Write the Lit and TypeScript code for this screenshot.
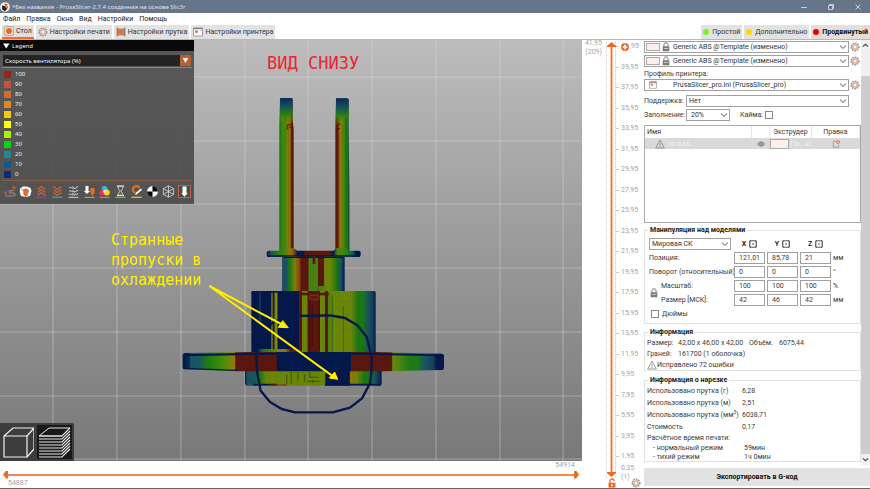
import { LitElement, html, svg, css } from "lit";
import { customElement, state } from "lit/decorators.js";
import { classMap } from "lit/directives/class-map.js";

const gear = svg`
  <circle cx="6" cy="6" r="4.6" fill="none" stroke="#8d8d8d" stroke-width="1.6" stroke-dasharray="1.9 1.1"></circle>
  <circle cx="6" cy="6" r="3.6" fill="#fff" stroke="#8d8d8d" stroke-width=".6"></circle>
  <circle cx="6" cy="6" r="2.4" fill="#fff" stroke="#f0874f" stroke-width="1"></circle>`;

const lock = svg`
  <path d="M3.5 5V3.4a2.5 2.5 0 0 1 5 0V5" fill="none" stroke="#7a7a7a" stroke-width="1.2"></path>
  <rect x="2" y="5" width="8" height="6" rx=".8" fill="#7a7a7a"></rect>
  <rect x="3.4" y="7.4" width="5.2" height="1" fill="#d5d5d5"></rect>`;

const warn = svg`
  <path d="M6 1.2 11.2 10.8H.8Z" fill="none" stroke="#808080" stroke-width=".9" stroke-linejoin="round"></path>
  <path d="M6 4.4v3.4M6 8.6v1.1" stroke="#808080" stroke-width="1"></path>`;

const chevron = html`<svg class="chev" viewBox="0 0 8 8"><path d="M1 2.6 4 5.4 7 2.6" fill="none" stroke="#444" stroke-width=".9"></path></svg>`;

const printer = svg`
  <rect x=".8" y="1.2" width="10.4" height="9.6" fill="#fff" stroke="#777" stroke-width=".8"></rect>
  <rect x=".8" y="1.2" width="10.4" height="1.4" fill="#777"></rect>
  <rect x="2.6" y="4" width="3.2" height="3" fill="#ed6b21"></rect>
  <path d="M8 4.4h2" stroke="#777" stroke-width=".7"></path>`;

const tabs = [
  { label: "Стол", icon: svg`<rect x=".8" y=".8" width="10.4" height="10.4" rx="1" fill="#f4e6df" stroke="#888" stroke-width=".8"></rect><circle cx="6" cy="6" r="3.6" fill="#ed6b21"></circle>` },
  { label: "Настройки печати", icon: gear },
  { label: "Настройки прутка", icon: svg`<rect x="2.5" y="2" width="7" height="8" fill="#cf7a4b"></rect><rect x=".8" y=".8" width="1.8" height="10.4" fill="#9b7766"></rect><rect x="9.4" y=".8" width="1.8" height="10.4" fill="#9b7766"></rect>` },
  { label: "Настройки принтера", icon: printer },
];

const modes = [
  { label: "Простой", color: "#7cf02a" },
  { label: "Дополнительно", color: "#ffd800" },
  { label: "Продвинутый", color: "#e80000" },
];

const legend: [string, string][] = [
  ["100", "#942616"], ["90", "#c8503c"], ["80", "#d46a2c"], ["70", "#e08722"],
  ["60", "#f2cc0c"], ["50", "#ffff00"], ["40", "#a8f000"], ["30", "#04d60f"],
  ["20", "#1f8890"], ["10", "#145a8a"], ["0", "#0a2b7c"],
];

const tools = [
  { name: "Перемещения", icon: svg`<path d="M2 11h8.500a1.500 1.500 0 0 0 0-3H7.500a1.200 1.200 0 0 1 0-2.400h3" fill="none" stroke="#8f8f8f" stroke-width="1.200"></path><circle cx="2.500" cy="7.500" r="1.300" fill="#b5602f"></circle><circle cx="11" cy="2.500" r="1.500" fill="#b5602f"></circle><path d="M11 3v3M2.500 8v2.500" stroke="#b5602f" stroke-width="1"></path>` },
  { name: "Очистка", icon: svg`<path d="M1 3.500 4 1.500h4l3.500 1.500 1 3-1.500 5-4 1-5-1L.8 7Z" fill="#fff"></path><path d="M4 4.500 6 3.500l2.500.5 1 2-.8 4.500L6.500 12 4.500 9.500Z" fill="#ed6b21"></path><path d="M3 3v3M9.500 4.500v3" stroke="#888" stroke-width=".8"></path>` },
  { name: "Откаты", icon: svg`<path d="M2.500 4.500 6.500 1.500l4 3M2.500 7.500 6.500 4.500l4 3M2.500 10.500l4-3 4 3" fill="none" stroke="#d0642c" stroke-width="1.200"></path><path d="M1.500 12.300h10" stroke="#c020c0" stroke-width="1.300"></path>` },
  { name: "Возвраты", icon: svg`<path d="M2.500 1.500l4 3 4-3M2.500 4.500l4 3 4-3M2.500 7.500l4 3 4-3" fill="none" stroke="#d0642c" stroke-width="1.200"></path><path d="M1.500 12.300h10" stroke="#2a9fc4" stroke-width="1.300"></path>` },
  { name: "Швы", icon: svg`<path d="M2 3c2-2 3 1 4 0M7 3.500c2 .5 1.500-2 4-1.500M2 6.500c2-2 2.500 1 4 0M7.500 6.500c1 1 2-1.500 3.500-1M2 9.800c1.500-2 2.500 1 4 0M7.500 9.800c1-2 2 .5 3.500-1M5.500 1.500l2 2.500M5.500 5l2 2.500M5.500 8l2 2.500" fill="none" stroke="#e0e0e0" stroke-width="1"></path><path d="M1.500 12.300h10" stroke="#d0d0d0" stroke-width="1"></path>` },
  { name: "Смена инструмента", icon: svg`<path d="M2.500 1h3v5H7L4 9 1 6h1.500Z" fill="#fff"></path><path d="M7.500 3h4v5l-2 3-2-3Z" fill="#ed6b21"></path><path d="M1.500 12.300h10" stroke="#c8bb4c" stroke-width="1"></path>` },
  { name: "Смена цвета", icon: svg`<circle cx="6.500" cy="4" r="3" fill="#3cb6e8"></circle><circle cx="4.300" cy="7.500" r="3" fill="#e8305c"></circle><circle cx="8.800" cy="7.500" r="3" fill="#f4d61c"></circle><circle cx="6.500" cy="6.400" r="1.400" fill="#fff"></circle><path d="M1.500 12.300h10" stroke="#e08c74" stroke-width="1"></path>` },
  { name: "Паузы печати", icon: svg`<path d="M3 1.200h7M3 10.500h7" stroke="#eee" stroke-width="1.200"></path><path d="M4 1.500c0 3 2 3.500 2 4.500s-2 2-2 4.500h5c0-2.500-2-3.500-2-4.500s2-1.500 2-4.500" fill="none" stroke="#ddd" stroke-width=".9"></path><path d="M5 9.800h3L6.500 8Z" fill="#ed6b21"></path><path d="M1.500 12.300h10" stroke="#3fd070" stroke-width="1.300"></path>` },
  { name: "Пользовательский G-код", icon: svg`<path d="M9.500 3A3.500 3.500 0 1 0 5 7.800" fill="none" stroke="#ed6b21" stroke-width="2.200"></path><path d="M5 10l1-2.500L11 3.500l1 1.200-5 4.500Z" fill="#fff"></path><path d="M1.500 12.300h10" stroke="#d8c43c" stroke-width="1.300"></path>` },
  { name: "Центр тяжести", icon: svg`<circle cx="6.500" cy="6.500" r="5.400" fill="#fff"></circle><path d="M6.500 6.500V1.100a5.400 5.400 0 0 1 5.400 5.400ZM6.500 6.500v5.400a5.400 5.400 0 0 1-5.400-5.400Z" fill="#000"></path>` },
  { name: "Оболочки", icon: svg`<path d="M6.500.8 11.600 3.600v5.800L6.500 12.200 1.400 9.400V3.600ZM6.500 6.500v5.700M6.500 6.500 1.400 3.600M6.500 6.500l5.100-2.900M6.500.8v5.700M6.500 6.500 1.400 9.400M6.500 6.500l5.100 2.900" fill="none" stroke="#ddd" stroke-width=".8"></path>` },
  { name: "Маркер инструмента", icon: svg`<rect x=".5" y=".5" width="12" height="12" fill="#4c4c4c" stroke="#c8673a" stroke-width=".9"></rect><path d="M4.500 1.500h4V8h1.300L6.500 11.800 3.200 8h1.300Z" fill="#fff"></path>` },
];

const ticks = Array.from({ length: 21 }, (_, i) => `${41 - i * 2},95`);

type Stop = [number, string];
const gradient = (id: string, x1: number, x2: number, stops: Stop[]) => svg`
  <linearGradient id=${id} gradientUnits="userSpaceOnUse" x1=${x1} x2=${x2} y1="0" y2="0">
    ${stops.map(([x, c]) => svg`<stop offset=${(x - x1) / (x2 - x1)} stop-color=${c}></stop>`)}
  </linearGradient>`;

const NAVY = "#04184a", TEAL = "#1a5462", GREEN = "#1c7a14", OLIVE = "#6c8808", LIME = "#4a8410", AMBER = "#96760a", RED = "#5c170e";

const scene = svg`
  <defs>
    ${gradient("prongL", 88, 131, [[88, "#24507a"], [91, GREEN], [97, "#3c8c0c"], [106, LIME], [110, OLIVE], [118, AMBER], [122, "#8a5a0c"], [123, RED], [131, RED]])}
    ${gradient("prongR", 256, 298, [[256, RED], [265, RED], [266, "#8a5a0c"], [270, AMBER], [276, OLIVE], [282, LIME], [288, GREEN], [294, GREEN], [298, NAVY]])}
    ${gradient("plate", 50, 332, [[50, NAVY], [64, TEAL], [80, GREEN], [104, LIME], [120, AMBER], [132, "#8a4a10"], [142, NAVY], [160, NAVY], [166, RED], [240, RED], [250, NAVY], [262, LIME], [280, LIME], [294, GREEN], [308, TEAL], [318, NAVY], [332, NAVY]])}
    ${gradient("neck", 337, 524, [[337, NAVY], [340, TEAL], [350, TEAL], [358, GREEN], [368, LIME], [376, AMBER], [388, "#8a4a10"], [394, RED], [415, RED], [416, LIME], [444, LIME], [445, RED], [462, RED], [463, OLIVE], [482, OLIVE], [500, GREEN], [512, TEAL], [524, NAVY]])}
    ${gradient("body", 244, 617, [[244, NAVY], [386, NAVY], [387, RED], [396, RED], [397, OLIVE], [412, OLIVE], [413, RED], [450, RED], [451, OLIVE], [464, OLIVE], [465, RED], [473, RED], [474, LIME], [488, OLIVE], [545, OLIVE], [562, GREEN], [578, GREEN], [594, TEAL], [608, "#12405c"], [617, NAVY]])}
    ${gradient("lip", 260, 390, [[260, NAVY], [280, GREEN], [320, OLIVE], [345, AMBER], [362, RED], [390, RED]])}
    ${gradient("flange", 38, 822, [[38, NAVY], [58, "#0a2c60"], [62, TEAL], [84, TEAL], [112, GREEN], [150, "#3c8c0c"], [178, OLIVE], [194, AMBER], [197, RED], [319, RED], [321, NAVY], [542, NAVY], [544, RED], [665, RED], [668, OLIVE], [690, LIME], [720, GREEN], [742, GREEN], [764, TEAL], [790, "#12405c"], [800, NAVY], [822, NAVY]])}
    ${gradient("base", 225, 635, [[225, NAVY], [232, TEAL], [252, TEAL], [270, GREEN], [290, OLIVE], [465, OLIVE], [467, NAVY], [538, NAVY], [541, AMBER], [562, OLIVE], [582, GREEN], [600, GREEN], [615, TEAL], [635, NAVY]])}
    <linearGradient id="bed" x1="0" y1="0" x2="0" y2="1"><stop offset="0" stop-color="#bcbcbc"></stop><stop offset="1" stop-color="#787878"></stop></linearGradient>
    <linearGradient id="cap" x1="0" y1="0" x2="0" y2="1"><stop offset="0" stop-color="#08285a"></stop><stop offset=".3" stop-color="#164e5c"></stop><stop offset=".6" stop-color="#2c7c14"></stop><stop offset="1" stop-color="#7c8a08" stop-opacity="0"></stop></linearGradient>
    <pattern id="layers" width="7" height="8" patternUnits="userSpaceOnUse"><path d="M1 0v8" stroke="#000" stroke-opacity=".14" stroke-width="1.500"></path></pattern>
  </defs>
  <rect x="-600" y="40" width="1800" height="421" fill="url(#bed)"></rect>
  <path d="M53 40v421M117 40v421M181 40v421M245 40v421M308 40v421M372 40v421M436 40v421M500 40v421M563 40v421M-600 77H1200M-600 141H1200M-600 204H1200M-600 268H1200M-600 332H1200M-600 396H1200M-600 459H1200" stroke="#e4e4e4" stroke-opacity=".4" stroke-width="1" fill="none"></path>
  <g transform="translate(250 40) scale(.33333)">
    <path d="M90 178q0-4 4-4h29q5 0 5 5v60l3 30v370H88V260Z" fill="url(#prongL)"></path>
    <path d="M90 178q0-4 4-4h29q5 0 5 5v60l3 14H90Z" fill="url(#cap)"></path>
    <path d="M108 226v410M116 240v396M99 300v336" stroke="#2c4406" stroke-opacity=".4" stroke-width="1.500"></path>
    <path d="M113 270v-16h13v8M118 262h8" stroke="#5c170e" stroke-width="3" fill="none"></path>
    <path d="M258 179q0-4 4-4h29q5 0 5 5v80l2 180v199H256V270Z" fill="url(#prongR)"></path>
    <path d="M258 179q0-4 4-4h29q5 0 5 5v50l-38 30Z" fill="url(#cap)"></path>
    <path d="M270 290v346M278 250v386M288 230v406" stroke="#2c4406" stroke-opacity=".4" stroke-width="1.500"></path>
    <path d="M262 284v-18h8M260 256q6-8 12-3" stroke="#5c170e" stroke-width="3" fill="none"></path>
    <path d="M56 632h34l4-8h36l12 8h108l10-8h30l6 8h30q6 0 6 6v7q0 6-6 6H56q-6 0-6-6v-7q0-6 6-6Z" fill="url(#plate)"></path>
    <path d="M52 648h278" stroke="#04184a" stroke-width="4"></path>
  </g>
  <g transform="translate(170 240) scale(.33333)">
    <path d="M337 50h187v105H337Z" fill="url(#neck)"></path>
    <path d="M337 50h187v105H337Z" fill="url(#layers)"></path>
    <path d="M340 52h180" stroke="#04184a" stroke-width="4"></path>
    <path d="M432 50v22" stroke="#5c170e" stroke-width="8"></path>
    <path d="M445 138h18v16h-18Z" fill="#4a8410"></path>
    <path d="M244 157q0-4 4-4h364q5 0 5 5v185H244Z" fill="url(#body)"></path>
    <path d="M270 158v90" stroke="#145a70" stroke-width="3"></path>
    <path d="M306 158v170" stroke="#8a8a08" stroke-width="4"></path>
    <path d="M318 158v170" stroke="#8a8a08" stroke-width="9"></path>
    <path d="M390 158h86v8h-86Z" fill="#5c170e"></path>
    <path d="M420 166h24v12h-24Z" stroke="#9a6410" stroke-width="1.500" fill="none"></path>
    <path d="M418 180v150M448 180v150M426 190v130" stroke="#2a0a10" stroke-width="2" fill="none"></path>
    <path d="M487 166v176M520 200v142" stroke="#3a6a14" stroke-width="3"></path>
    <path d="M244 157h373v186H244Z" fill="url(#layers)"></path>
    <path d="M260 327h130v16H260Z" fill="url(#lip)"></path>
    <path d="M232 393h403v38q0 6-6 6H232q-7 0-7-7v-37Z" fill="url(#base)"></path>
    <path d="M232 393h403v44H232Z" fill="url(#layers)"></path>
    <path d="M350 404v28M364 396v34M384 396v26M404 402v24M420 396v16h26M412 424h40M430 430v-10" stroke="#1c3c1c" stroke-width="2" fill="none"></path>
    <path d="M250 434h70M466 434h165" stroke="#04184a" stroke-width="5"></path>
    <path d="M300 435h50" stroke="#7a2a10" stroke-width="3"></path>
    <path d="M44 339 244 336H617l199 5q6 1 6 7v36q0 6-6 6L640 394H200L44 388q-6 0-6-6v-36q0-6 6-7Z" fill="url(#flange)"></path>
    <path d="M40 343 244 338H617l203 6v5L617 345H244L40 349Z" fill="#04184a"></path>
    <path d="M196 348h470v44H196Z" fill="url(#layers)"></path>
    <path d="M40 385 200 391" stroke="#04184a" stroke-width="4"></path>
    <path d="M360 354h38v32h-38ZM366 360h26v20h-26ZM470 354h38v32h-38ZM476 360h26v20h-26ZM410 362h50M410 378h50" stroke="#0c2460" stroke-width="1.500" fill="none"></path>
    <path d="M380 228 480 226 525 234 562 256 590 290 600 330 606 355 604 400 600 430 576 475 540 503 488 517 375 517 335 507 300 486 272 452 262 400 259 360 262 310 275 280 310 246 345 233Z" fill="none" stroke="#04184a" stroke-width="7" stroke-linejoin="round"></path>
    <path d="M118 138 345 258M118 138 490 410" stroke="#ffee00" stroke-width="6"></path>
    <path d="M118 135 150 152 145 160Z" fill="#ffee00"></path>
    <path d="M355 263 325 262 338 242ZM503 418 478 414 494 396Z" fill="#ffee00" stroke="#ffee00" stroke-width="3"></path>
  </g>
  <text class="note red" x="267" y="69">ВИД СНИЗУ</text>
  <text class="note yellow" x="111" y="245">Странные</text>
  <text class="note yellow" x="111" y="265">пропуски в</text>
  <text class="note yellow" x="111" y="285">охлаждении</text>`;

@customElement("app-root")
export class AppRoot extends LitElement {
  @state() private tab = 0;
  @state() private mode = 2;

  static styles = css`
    :host { display: flex; flex-direction: column; min-height: 100vh; box-sizing: border-box; background: #fff;
      border-bottom: 1px solid #666; color: #3a3a3a; font: 7px/10px Roboto, "Open Sans", sans-serif; }
    * { box-sizing: border-box; }
    button, input, select { font: inherit; color: inherit; margin: 0; padding: 0; border: 0; border-radius: 0; background: none; }
    svg { display: block; flex: none; }
    .i8 { width: 8px; height: 8px; }
    .i10 { width: 10px; height: 10px; }
    .title { display: flex; align-items: center; height: 13px; padding: 0; gap: 2px; background: #66758a; color: #dfe3e9; font-family: "Noto Sans", sans-serif; font-size: 6px; }
    .title span { flex: 1; }
    .win { display: flex; justify-content: center; width: 25px; }
    .menu { display: flex; gap: 6px; height: 12px; padding: 0 3px; align-items: center; }
    .menu a { color: #222; text-decoration: none; }
    .tabs { display: flex; gap: 2px; height: 15px; padding-left: 2px; border-bottom: 1px solid #f3a582; }
    .tab { display: flex; align-items: center; gap: 2px; padding: 0 2px; background: #e2e2e2; border-bottom: 1px solid #e2e2e2; color: #333; }
    .tab.on { background: #e6dcd8; border-bottom: 2px solid #ee6a30; }
    .modes { display: flex; gap: 2px; margin-left: auto; }
    .mode { display: flex; align-items: center; gap: 3px; padding: 0 2px; background: #e2e2e2; color: #333; }
    .mode.on { background: #e6dcd8; color: #111; font-weight: 700; }
    .dot { width: 6px; height: 6px; border-radius: 50%; }
    .main { flex: 1; display: grid; grid-template-columns: minmax(0, 1fr) 61px 227px; }
    .left { display: flex; flex-direction: column; }
    .view { position: relative; flex: 1; min-height: 300px; overflow: hidden; background: #999; }
    .scene { position: absolute; inset: 0; width: 100%; height: 100%; }
    .note { font-family: "DejaVu Sans Mono", monospace; }
    .red { font-size: 17px; fill: #ee2430; }
    .yellow { font-size: 15px; fill: #ffee00; }
    .legend { position: absolute; left: 0; top: 0; width: 194px; background: rgba(62, 62, 62, .8); color: #f0f0f0; font-family: "Noto Sans", sans-serif; font-size: 6px; }
    .legend h2 { display: flex; align-items: center; gap: 2px; margin: 0; height: 11px; padding: 0 2px; background: #0a0a0a; font-size: 6px; font-weight: 400; }
    .kind { display: grid; margin: 3px 2px 0; padding: 1px 1px 1px; border-bottom: 1px solid #c8733f; }
    .kind select { grid-area: 1 / 1; height: 11px; padding-left: 2px; appearance: none; background: #232323; font-size: 6px; }
    .kind svg { grid-area: 1 / 1; justify-self: end; pointer-events: none; }
    .keys { list-style: none; margin: 1px 0 0; padding: 0 4px; }
    .keys li { display: flex; align-items: center; gap: 4px; height: 10px; }
    .sw { width: 7px; height: 7px; }
    .tools { display: flex; justify-content: space-between; margin: 1px 2px 0; padding: 4px 1px 6px; border-top: 1px solid #8a5a42; }
    .tools svg { width: 13px; height: 13px; }
    .cubes { position: absolute; left: 0; bottom: 0; display: flex; padding: 2px 2px 2px 1px; gap: 2px; background: #3c3c3c; border-radius: 0 2px 0 0; }
    .cubes button { padding: 0 1px; }
    .cubes .on { background: #191919; }
    .moves { display: grid; height: 27px; grid-template-rows: 9px 9px 9px; padding: 0 3px; color: #a4a4a4; line-height: 9px; }
    .end { justify-self: end; padding-right: 4px; }
    .start { padding-left: 5px; }
    .dual { display: grid; }
    .dual input { grid-area: 1 / 1; appearance: none; pointer-events: none; width: 100%; height: 100%; }
    .dual input::-webkit-slider-thumb { appearance: none; pointer-events: auto; background: #ed6b21; }
    .dual.h { background: linear-gradient(#f08a55, #f08a55) center / calc(100% - 6px) 2px no-repeat; }
    .dual.h input::-webkit-slider-thumb { width: 5px; height: 8px; }
    .h .lo::-webkit-slider-thumb { clip-path: polygon(0 50%, 60% 0, 100% 0, 100% 100%, 60% 100%); }
    .h .hi::-webkit-slider-thumb { clip-path: polygon(100% 50%, 40% 0, 0 0, 0 100%, 40% 100%); }
    .ruler { display: grid; grid-template-columns: 20px 19px 22px; grid-template-rows: 1fr 10px; padding-top: 2px; color: #a4a4a4; line-height: 9px; }
    .cur { text-align: right; margin-top: -3px; }
    .dual.v { width: 9px; margin-bottom: 1px;
      background: linear-gradient(90deg, #f9c0a2 0 1px, #ee7234 1px 2px, #f9c0a2 2px 3px) center 3px / 3px calc(100% - 6px) no-repeat; }
    .track { display: grid; border: dotted #ccc; border-width: 0 1px; margin: 0 5px 0 4px; }
    .dual.v input { writing-mode: vertical-lr; direction: rtl; min-height: 0; }
    .dual.v input::-webkit-slider-thumb { width: 9px; height: 5px; }
    .v .hi::-webkit-slider-thumb { clip-path: polygon(50% 0, 100% 80%, 100% 100%, 0 100%, 0 80%); }
    .v .lo::-webkit-slider-thumb { clip-path: polygon(50% 100%, 100% 20%, 100% 0, 0 0, 0 20%); }
    .marks { grid-area: 1 / 3 / 3; display: flex; flex-direction: column; }
    .marks ol { flex: 1; display: flex; flex-direction: column; justify-content: space-between; list-style: none; margin: 0; padding: 0; }
    .marks li { display: flex; align-items: center; gap: 2px; height: 9px; margin-left: -5px; }
    .marks li::before { content: ""; width: 3px; height: 1px; background: #ccc; }
    .low { padding: 3px 0 6px; line-height: 9px; }
    .corner { grid-area: 2 / 2; justify-self: center; }
    .cog { grid-area: 2 / 3; justify-self: end; margin-right: 2px; }
    .side { display: flex; flex-direction: column; padding-left: 1px; }
    .scroll { display: flex; flex: 1; }
    .panel { flex: 1; min-width: 0; display: flex; flex-direction: column; padding-top: 1px; }
    .bar { width: 9px; display: flex; flex-direction: column; background: #f0f0f0; }
    .bar svg { margin: 2px 1px; width: 7px; height: 7px; }
    .thumb { flex: 1; margin: 25px 0 0; background: #cdcdcd; }
    .pick { display: grid; grid-template-columns: minmax(0, 1fr) 12px; align-items: center; margin-bottom: 2px; }
    .pick > button { justify-self: center; }
    .combo { display: grid; align-items: center; }
    .combo > * { grid-area: 1 / 1; }
    .combo select { appearance: none; width: 100%; height: 12px; padding-left: 2px; border: 1px solid #a0a0a0; background: #fff; color: #333; line-height: 10px; }
    .combo .chev { justify-self: end; width: 8px; height: 8px; margin-right: 2px; pointer-events: none; }
    .pick select { padding-left: 28px; }
    .deco { display: flex; align-items: center; gap: 1px; padding-left: 2px; pointer-events: none; z-index: 1; }
    .peach { width: 14px; height: 8px; background: #fdeee9; border: 1px solid #aaa; }
    .lab { height: 10px; }
    .row { display: flex; align-items: center; gap: 2px; margin: 2px 12px 0 0; }
    .row > label:first-child { width: 40px; white-space: nowrap; }
    .grow { flex: 1; }
    .fill { width: 44px; }
    .row .fill select { padding-left: 4px; }
    .brim { display: flex; align-items: center; gap: 2px; margin-left: 8px; }
    input[type="checkbox"] { appearance: none; width: 8px; height: 8px; border: 1px solid #888; background: #fff; }
    .list { margin-top: 4px; height: 98px; border: 1px solid #aaa; }
    table { width: 100%; border-collapse: collapse; table-layout: fixed; }
    th { height: 12px; padding: 0 2px; font-weight: 400; border-right: 1px solid #e4e4e4; }
    th:first-child { text-align: left; }
    td { height: 11px; padding: 0; background: #d9d9d9; color: #f4f4f4; }
    .cell { display: flex; align-items: center; gap: 2px; }
    .first { padding-left: 10px; }
    .mid { justify-content: center; }
    .c2 { width: 18px; } .c3 { width: 42px; } .c4 { width: 48px; }
    .ext { width: 19px; height: 10px; background: #fdeee9; border: 1px solid #aaa; }
    fieldset { margin: 0; min-width: 0; border: 1px solid #e2e2e2; padding: 0 2px; }
    fieldset legend { padding: 0 2px; margin-left: 1px; font-weight: 700; color: #222; line-height: 10px; }
    .manip { margin-top: 2px; padding: 3px 4px 4px; }
    .manip legend { margin-left: -1px; }
    .grid { display: grid; grid-template-columns: 10px 71px 31px 31px 31px 1fr; gap: 2px; align-items: center; }
    .grid input[type="text"] { width: 100%; height: 12px; padding-left: 4px; border: 1px solid #a0a0a0; background: #fff; }
    .wide { grid-column: span 2; white-space: nowrap; }
    .wide.combo { width: 82px; }
    .axis { display: flex; align-items: center; justify-content: center; gap: 3px; font-weight: 700; color: #222; }
    .lk { grid-row: span 2; }
    .inch { display: flex; align-items: center; gap: 3px; margin: 3px 0 0 2px; }
    .info { margin-top: 3px; }
    .info p { display: flex; align-items: center; margin: 0; height: 11px; }
    .k1 { width: 31px; } .k2 { width: 71px; } .k3 { width: 30px; }
    .slice p { display: grid; grid-template-columns: 95px 1fr; height: 12px; margin: 0; align-items: center; }
    .slice .head { height: 10px; }
    .slice .t { height: 9px; padding-left: 6px; grid-template-columns: 91px 1fr; }
    sup { font-size: 5px; line-height: 0; }
    .slice { margin-top: 4px; }
    .export { height: 18px; margin: 3px 0 2px; background: #e2e2e2; color: #111; font-weight: 700; }
  `;

  private filament(label: string) {
    return html`<div class="pick">
      <div class="combo">
        <select aria-label=${label}><option>Generic ABS @Template (изменено)</option></select>
        <span class="deco"><span class="peach"></span><svg class="i10" viewBox="0 0 12 12">${lock}</svg></span>
        ${chevron}
      </div>
      <button aria-label="Изменить"><svg class="i10" viewBox="0 0 12 12">${gear}</svg></button>
    </div>`;
  }

  private triple(name: string, values: string[], unit: string) {
    return html`${values.map((v, i) => html`<input type="text" aria-label=${`${name} ${"XYZ"[i]}`} .value=${v}>`)}<span>${unit}</span>`;
  }

  render() {
    return html`
      <header>
        <div class="title">
          <svg class="i10" viewBox="0 0 12 12"><circle cx="6" cy="6" r="5.800" fill="#f4f4f4"></circle><path d="M5 1.500 10 3 6 6Z" fill="#ed6b21"></path><path d="M2.500 4 6.500 5.500 9 8 6 11 2.500 9Z" fill="#222"></path><path d="M6 6l3-1.500 1 2-2 1.500Z" fill="#ed6b21"></path></svg>
          <span>*Без названия - PrusaSlicer-2.7.4 созданная на основе Slic3r</span>
          <button class="win" aria-label="Свернуть"><svg class="i8" viewBox="0 0 8 8"><path d="M1 4.500h6" stroke="#dfe3e9" stroke-width=".8"></path></svg></button>
          <button class="win" aria-label="Развернуть"><svg class="i8" viewBox="0 0 8 8"><path d="M1.500 2.500h4v4h-4ZM2.500 2.500v-1h4v4h-1" fill="none" stroke="#dfe3e9" stroke-width=".8"></path></svg></button>
          <button class="win" aria-label="Закрыть"><svg class="i8" viewBox="0 0 8 8"><path d="M1.500 1.500l5 5M6.500 1.500l-5 5" stroke="#dfe3e9" stroke-width=".8"></path></svg></button>
        </div>
        <nav class="menu">${["Файл", "Правка", "Окна", "Вид", "Настройки", "Помощь"].map((m) => html`<a href="#">${m}</a>`)}</nav>
        <div class="tabs">
          ${tabs.map((t, i) => html`<button class=${classMap({ tab: true, on: this.tab === i })} @click=${() => (this.tab = i)}><svg class="i10" viewBox="0 0 12 12">${t.icon}</svg>${t.label}</button>`)}
          <div class="modes">
            ${modes.map((m, i) => html`<button class=${classMap({ mode: true, on: this.mode === i })} @click=${() => (this.mode = i)}><span class="dot" style="background:${m.color}"></span>${m.label}</button>`)}
          </div>
        </div>
      </header>
      <main class="main">
        <section class="left">
          <div class="view">
            <svg class="scene" viewBox="0 40 582 421" preserveAspectRatio="xMidYMid slice">${scene}</svg>
            <div class="legend">
              <h2><svg class="i8" viewBox="0 0 8 8"><path d="M1 1.500h6.500L4.250 6.500Z" fill="#fff"></path></svg>Legend</h2>
              <div class="kind">
                <select aria-label="Вид"><option>Скорость вентилятора (%)</option></select>
                <svg width="11" height="11" viewBox="0 0 11 11"><rect width="11" height="11" fill="#b8612f"></rect><path d="M2.800 3h5.400L5.500 8Z" fill="#fff"></path></svg>
              </div>
              <ul class="keys">${legend.map(([v, c]) => html`<li><span class="sw" style="background:${c}"></span>${v}</li>`)}</ul>
              <div class="tools">${tools.map((t) => html`<button aria-label=${t.name}><svg viewBox="0 0 13 13">${t.icon}</svg></button>`)}</div>
            </div>
            <div class="cubes">
              <button aria-label="3D-вид"><svg width="32" height="34" viewBox="0 0 32 34"><path d="M2 11h23v21H2ZM2 11 11 3h21L25 11M32 3v21l-7 8" fill="none" stroke="#f0f0f0" stroke-width="1.200"></path></svg></button>
              <button class="on" aria-label="Просмотр нарезки"><svg width="33" height="34" viewBox="0 0 33 34"><path d="M1 11 11 3h21L24 11Z" fill="none" stroke="#e8e8e8" stroke-width="1"></path>${[0, 3, 6, 9, 12, 15, 18, 21].map((d) => svg`<path d="M1 ${11 + d}h23l8-8" fill="none" stroke="#e8e8e8" stroke-width="1.100"></path>`)}</svg></button>
            </div>
          </div>
          <div class="moves">
            <span class="end">54914</span>
            <div class="dual h">
              <input class="lo" type="range" min="54887" max="54914" .value=${"54887"} aria-label="Первое перемещение">
              <input class="hi" type="range" min="54887" max="54914" .value=${"54914"} aria-label="Последнее перемещение">
            </div>
            <span class="start">54887</span>
          </div>
        </section>
        <section class="ruler">
          <div class="cur">41,95<br>(209)</div>
          <div class="track">
            <div class="dual v">
              <input class="hi" type="range" min="1" max="209" .value=${"209"} aria-label="Верхний слой">
              <input class="lo" type="range" min="1" max="209" .value=${"1"} aria-label="Нижний слой">
            </div>
          </div>
          <div class="marks">
            <ol>${ticks.map((t, i) => i ? html`<li>${t}</li>` : html`<li><svg class="i8" viewBox="0 0 10 10"><circle cx="5" cy="5" r="5" fill="#ed6b21"></circle><path d="M5 2v6M2 5h6" stroke="#fff" stroke-width="2"></path></svg>95</li>`)}</ol>
            <div class="low">0,35<br>(1)</div>
          </div>
          <svg class="corner i10" viewBox="0 0 10 10"><path d="M3 5V3a2 2 0 0 1 4 0" fill="none" stroke="#ed6b21" stroke-width="1.300"></path><rect x="1.500" y="4.800" width="7" height="4.800" fill="#ed6b21"></rect><circle cx="5" cy="7.200" r="1" fill="#fff"></circle></svg>
          <svg class="cog i10" viewBox="0 0 12 12">${gear}</svg>
        </section>
        <aside class="side">
          <div class="scroll">
            <div class="panel">
              ${this.filament("Пруток 1")}${this.filament("Пруток 2")}
              <label class="lab" for="pr">Профиль принтера:</label>
              <div class="pick">
                <div class="combo">
                  <select id="pr"><option>PrusaSlicer_pro.ini (PrusaSlicer_pro)</option></select>
                  <span class="deco"><svg width="14" height="8" viewBox="0 0 12 12">${printer}</svg></span>${chevron}
                </div>
                <button aria-label="Изменить"><svg class="i10" viewBox="0 0 12 12">${gear}</svg></button>
              </div>
              <div class="row"><label for="sup">Поддержка:</label><div class="combo grow"><select id="sup"><option>Нет</option></select>${chevron}</div></div>
              <div class="row"><label for="inf">Заполнение:</label><div class="combo fill"><select id="inf"><option>20%</option></select>${chevron}</div>
                <label class="brim">Кайма:<input type="checkbox"></label></div>
              <div class="list">
                <table>
                  <thead><tr><th>Имя</th><th class="c2"></th><th class="c3">Экструдер</th><th class="c4">Правка</th></tr></thead>
                  <tbody><tr>
                    <td><div class="cell first"><svg class="i10" viewBox="0 0 12 12">${warn}</svg>тяга.stl</div></td>
                    <td><div class="cell mid"><svg class="i8" viewBox="0 0 12 12"><path d="M.5 6Q6 0 11.500 6 6 12 .5 6Z" fill="none" stroke="#666" stroke-width="1.200"></path><circle cx="6" cy="6" r="2" fill="none" stroke="#666" stroke-width="1.200"></circle></svg></div></td>
                    <td><div class="cell"><span class="ext"></span>По...ю</div></td>
                    <td><div class="cell mid"><svg class="i8" viewBox="0 0 12 12"><path d="M6 2H2v9h8V7" fill="none" stroke="#888" stroke-width="1"></path><circle cx="9" cy="3" r="2.200" fill="none" stroke="#ed6b21" stroke-width="1.400"></circle></svg></div></td>
                  </tr></tbody>
                </table>
              </div>
              <fieldset class="manip">
                <legend>Манипуляция над моделями</legend>
                <div class="grid">
                  <div class="wide combo"><select aria-label="Система координат"><option>Мировая СК</option></select>${chevron}</div>
                  ${["X", "Y", "Z"].map((a) => html`<span class="axis">${a}<svg class="i8" viewBox="0 0 10 10"><path d="M3.500 1H1v8h2.500M6.500 1H9v8H6.500M4 1h2M4 9h2" fill="none" stroke="#222" stroke-width="1.200"></path><rect x="4.200" y="4.200" width="1.600" height="1.600" fill="#222"></rect></svg></span>`)}<span></span>
                  <span class="wide">Позиция:</span>${this.triple("Позиция", ["121,01", "85,78", "21"], "мм")}
                  <span class="wide">Поворот (относительный):</span>${this.triple("Поворот", ["0", "0", "0"], "°")}
                  <svg class="i10 lk" viewBox="0 0 12 12">${lock}</svg>
                  <span>Масштаб:</span>${this.triple("Масштаб", ["100", "100", "100"], "%")}
                  <span>Размер [МСК]:</span>${this.triple("Размер", ["42", "46", "42"], "мм")}
                </div>
                <label class="inch"><input type="checkbox">Дюймы</label>
              </fieldset>
              <fieldset class="info">
                <legend>Информация</legend>
                <p><span class="k1">Размер:</span><span class="k2">42,00 x 46,00 x 42,00</span><span class="k3">Объём:</span>6075,44</p>
                <p><span class="k1">Граней:</span>161700 (1 оболочка)</p>
                <p><svg class="i10" viewBox="0 0 12 12">${warn}</svg>Исправлено 72 ошибки</p>
              </fieldset>
              <fieldset class="slice">
                <legend>Информация о нарезке</legend>
                <p><span>Использовано прутка (г)</span><span>6,28</span></p>
                <p><span>Использовано прутка (м)</span><span>2,51</span></p>
                <p><span>Использовано прутка (мм<sup>3</sup>)</span><span>6038,71</span></p>
                <p><span>Стоимость</span><span>0,17</span></p>
                <p class="head"><span>Расчётное время печати:</span></p>
                <p class="t"><span>- нормальный режим</span><span>59мин</span></p>
                <p class="t"><span>- тихий режим</span><span>1ч 0мин</span></p>
              </fieldset>
            </div>
            <div class="bar">
              <svg viewBox="0 0 8 8"><path d="M1 5.400 4 2.600 7 5.400" fill="none" stroke="#444" stroke-width="1.200"></path></svg>
              <div class="thumb"></div>
              <svg viewBox="0 0 8 8"><path d="M1 2.600 4 5.400 7 2.600" fill="none" stroke="#444" stroke-width="1.200"></path></svg>
            </div>
          </div>
          <button class="export">Экспортировать в G-код</button>
        </aside>
      </main>`;
  }
}
